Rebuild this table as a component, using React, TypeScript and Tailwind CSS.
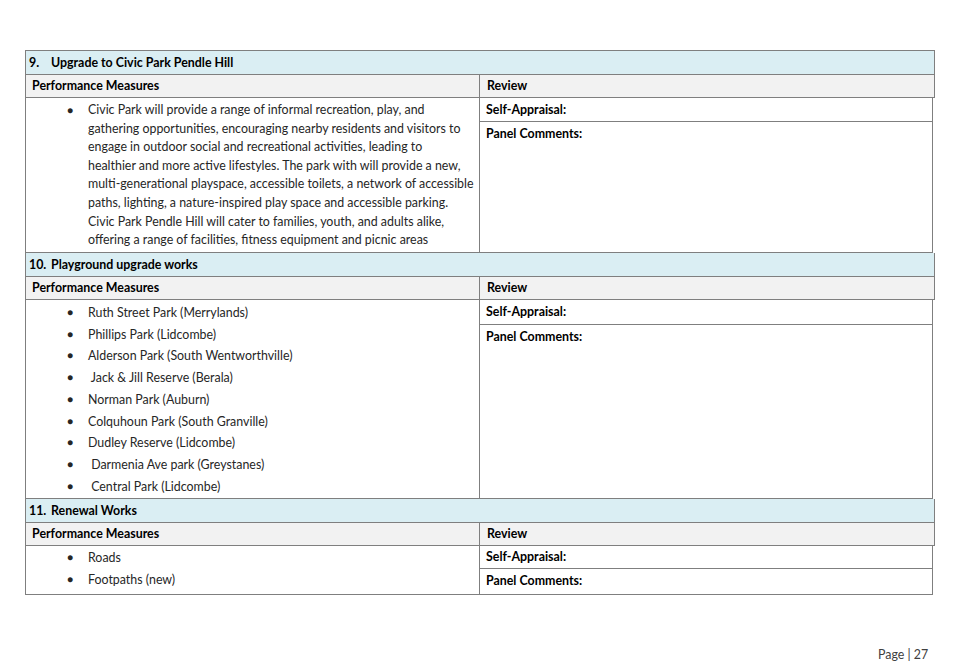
const font = { fontFamily: "Lato, 'Open Sans', sans-serif" };

type Section = {
  num: string;
  title: string;
  items: string[][];
  bodyClass: string;
  itemClass: string;
  selfH: string;
};

// lines are broken where the source document breaks them
const sections: Section[] = [
  {
    num: "9.",
    title: "Upgrade to Civic Park Pendle Hill",
    items: [
      [
        "Civic Park will provide a range of informal recreation, play, and",
        "gathering opportunities, encouraging nearby residents and visitors to",
        "engage in outdoor social and recreational activities, leading to",
        "healthier and more active lifestyles. The park with will provide a new,",
        "multi-generational playspace, accessible toilets, a network of accessible",
        "paths, lighting, a nature-inspired play space and accessible parking.",
        "Civic Park Pendle Hill will cater to families, youth, and adults alike,",
        "offering a range of facilities, fitness equipment and picnic areas",
      ],
    ],
    bodyClass: "h-[154px] pt-[3px]",
    itemClass: "leading-[18.6px]",
    selfH: "h-[24px]",
  },
  {
    num: "10.",
    title: "Playground upgrade works",
    items: [
      ["Ruth Street Park (Merrylands)"],
      ["Phillips Park (Lidcombe)"],
      ["Alderson Park (South Wentworthville)"],
      ["\u00a0Jack & Jill Reserve (Berala)"],
      ["Norman Park (Auburn)"],
      ["Colquhoun Park (South Granville)"],
      ["Dudley Reserve (Lidcombe)"],
      ["\u00a0Darmenia Ave park (Greystanes)"],
      ["\u00a0Central Park (Lidcombe)"],
    ],
    bodyClass: "h-[198px] pt-[2px]",
    itemClass: "leading-[21.7px]",
    selfH: "h-[25px]",
  },
  {
    num: "11.",
    title: "Renewal Works",
    items: [["Roads"], ["Footpaths (new)"]],
    bodyClass: "h-[48px] pt-[1px]",
    itemClass: "leading-[21.7px]",
    selfH: "h-[23px]",
  },
];

function Block({ s }: { s: Section }) {
  return (
    <div>
      <div className="h-[24px] bg-[#daeef3] border-x border-b border-[#7f7f7f] flex items-center pl-[3px] font-bold text-black">
        <span className="w-[22px]">{s.num}</span>
        <span>{s.title}</span>
      </div>
      <div className="grid grid-cols-[454px_1fr] h-[23px] bg-[#f2f2f2] border-x border-b border-[#7f7f7f] font-bold text-black">
        <div className="border-r border-[#7f7f7f] pl-[6px] flex items-center">Performance Measures</div>
        <div className="pl-[7px] flex items-center">Review</div>
      </div>
      <div className="grid grid-cols-[454px_1fr] w-[908px] border-x border-b border-[#7f7f7f]">
        <ul className={`border-r border-[#7f7f7f] pl-[41px] pr-[4px] ${s.bodyClass}`}>
          {s.items.map((lines, i) => (
            <li key={i} className={`flex text-[#262626] ${s.itemClass}`}>
              <span className="w-[21px] shrink-0 text-[10px]">●</span>
              <span className="whitespace-pre">
                {lines.map((l, j) => (
                  <span key={j} className="block">{l}</span>
                ))}
              </span>
            </li>
          ))}
        </ul>
        <div className="flex flex-col font-bold text-black">
          <div className={`${s.selfH} border-b border-[#7f7f7f] pl-[6px] flex items-center`}>Self-Appraisal:</div>
          <div className="pl-[6px] pt-[3px]">Panel Comments:</div>
        </div>
      </div>
    </div>
  );
}

export default function App() {
  return (
    <div className="w-[956px] h-[661px] bg-white relative text-[12.4px] leading-[18px]" style={font}>
      <div className="pt-[50px] pl-[25px]">
        <div className="w-[910px] border-t border-[#7f7f7f]">
          {sections.map((s) => (
            <Block key={s.num} s={s} />
          ))}
        </div>
      </div>
      <div className="absolute left-[878px] top-[646px] text-[12.4px] text-[#404040]">
        Page | 27
      </div>
    </div>
  );
}
